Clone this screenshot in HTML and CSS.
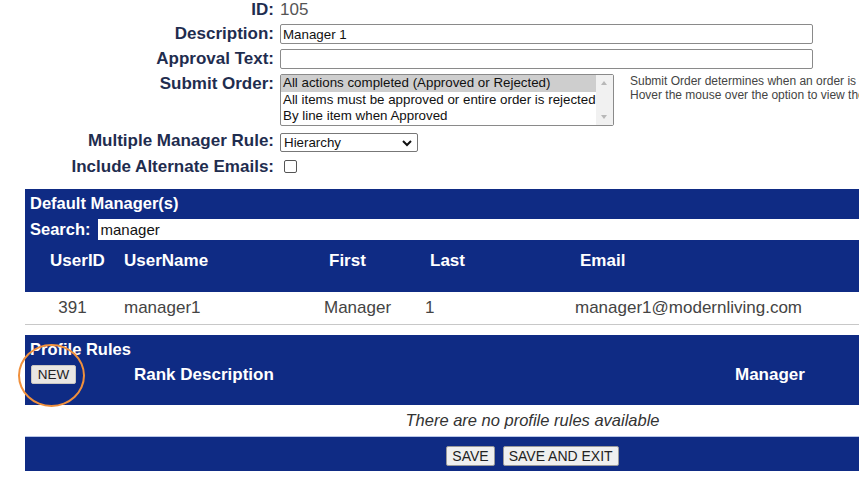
FILE: index.html
```html
<!DOCTYPE html>
<html lang="en">
<head>
    <meta charset="UTF-8">
    <meta name="viewport" content="width=device-width, initial-scale=1.0">
    <title>Approval Profile</title>
    <link rel="stylesheet" href="styles.css">
</head>
<body>
    <div class="page">
        <!-- Profile header fields -->
        <div class="form-grid">
            <div class="label">ID:</div>
            <div class="value">105</div>

            <div class="label">Description:</div>
            <div><input class="text-input" type="text" value="Manager 1"></div>

            <div class="label">Approval Text:</div>
            <div><input class="text-input" type="text" value=""></div>

            <div class="label">Submit Order:</div>
            <div class="submit-row">
                <div class="listbox">
                    <div class="listbox-options">
                        <div class="option selected">All actions completed (Approved or Rejected)</div>
                        <div class="option">All items must be approved or entire order is rejected</div>
                        <div class="option">By line item when Approved</div>
                    </div>
                    <div class="listbox-scroll">
                        <span class="arrow up"></span>
                        <span class="arrow down"></span>
                    </div>
                </div>
                <div class="help-text">
                    Submit Order determines when an order is released.<br>
                    Hover the mouse over the option to view the details.
                </div>
            </div>

            <div class="label">Multiple Manager Rule:</div>
            <div>
                <div class="dropdown">
                    <span>Hierarchy</span>
                    <svg width="12" height="8" viewBox="0 0 12 8"><path d="M2 2 L6 6 L10 2" fill="none" stroke="#111" stroke-width="2"/></svg>
                </div>
            </div>

            <div class="label">Include Alternate Emails:</div>
            <div><span class="checkbox"></span></div>
        </div>

        <!-- Default managers -->
        <div class="panel">
            <div class="panel-title">Default Manager(s)</div>
            <div class="search-row">
                <span class="search-label">Search:</span>
                <input class="search-input" type="text" value="manager">
            </div>
            <table class="grid">
                <thead>
                    <tr>
                        <th class="col-id">UserID</th>
                        <th class="col-user">UserName</th>
                        <th class="col-first wide">First</th>
                        <th class="col-last wide">Last</th>
                        <th class="wide">Email</th>
                    </tr>
                </thead>
                <tbody>
                    <tr>
                        <td class="col-id">391</td>
                        <td>manager1</td>
                        <td>Manager</td>
                        <td>1</td>
                        <td>manager1@modernliving.com</td>
                    </tr>
                </tbody>
            </table>
        </div>

        <!-- Profile rules -->
        <div class="panel rules">
            <div class="panel-title">Profile Rules</div>
            <div class="rules-head">
                <div class="new-cell">
                    <button class="btn btn-new">NEW</button>
                    <span class="highlight-ring"></span>
                </div>
                <div class="rank-col">Rank Description</div>
                <div class="manager-col">Manager</div>
            </div>
            <div class="empty-row">There are no profile rules available</div>
            <div class="footer-bar">
                <button class="btn">SAVE</button>
                <button class="btn">SAVE AND EXIT</button>
            </div>
        </div>
    </div>
</body>
</html>
```

FILE: styles.css
```css
* {
    margin: 0;
    padding: 0;
    box-sizing: border-box;
}

html, body {
    overflow: hidden;
}

body {
    font-family: "Liberation Sans", Arial, sans-serif;
    background: white;
    color: #333;
}

.page {
    width: 1040px;
}

/* ---- form ---- */
.form-grid {
    display: grid;
    grid-template-columns: 274px auto;
    column-gap: 6px;
    row-gap: 5px;
}

.label {
    text-align: right;
    font-weight: bold;
    font-size: 17px;
    color: #1f2d4f;
    line-height: 19px;
}

.value {
    font-size: 17px;
    color: #555;
    line-height: 19px;
}

.text-input {
    display: block;
    width: 533px;
    height: 20px;
    border: 1px solid #8a8a8a;
    border-radius: 2px;
    padding: 0 2px;
    font-family: inherit;
    font-size: 13.33px;
    color: #111;
}

.submit-row {
    display: flex;
    align-items: flex-start;
}

.listbox {
    display: flex;
    width: 334px;
    height: 52px;
    border: 1px solid #8a8a8a;
    border-radius: 2px;
    background: #fff;
}

.listbox-options {
    flex: 1;
}

.option {
    font-size: 13.33px;
    line-height: 16.7px;
    padding-left: 2px;
    color: #111;
    white-space: nowrap;
}

.option.selected {
    background: #cecece;
}

.listbox-scroll {
    width: 17px;
    background: #f1f1f1;
    position: relative;
}

.arrow {
    position: absolute;
    left: 5px;
    width: 0;
    height: 0;
    border-left: 3.5px solid transparent;
    border-right: 3.5px solid transparent;
}

.arrow.up {
    top: 6px;
    border-bottom: 4px solid #b8b8b8;
}

.arrow.down {
    bottom: 6px;
    border-top: 4px solid #b8b8b8;
}

.help-text {
    font-size: 12px;
    line-height: 14px;
    color: #444;
    margin-left: 16px;
    white-space: nowrap;
}

.dropdown {
    width: 138px;
    height: 19px;
    margin-top: 2px;
    border: 1px solid #777;
    border-radius: 2px;
    display: flex;
    align-items: center;
    justify-content: space-between;
    padding: 0 4px 0 3px;
    font-size: 13.33px;
    color: #111;
}

.checkbox {
    display: block;
    width: 13px;
    height: 13px;
    margin: 3px 0 0 4px;
    border: 1px solid #555;
    border-radius: 2px;
}

/* ---- blue panels ---- */
.panel {
    margin-left: 25px;
    margin-top: 13px;
    background: #0f2b84;
    color: white;
}

.panel-title {
    font-weight: bold;
    font-size: 16.5px;
    padding: 4px 5px 4px;
    line-height: 20px;
}

.search-row {
    display: flex;
    align-items: center;
    padding-left: 5px;
    height: 24px;
}

.search-label {
    font-weight: bold;
    font-size: 16.5px;
    margin-right: 7px;
}

.search-input {
    flex: 1;
    height: 21px;
    border: none;
    padding-left: 3px;
    font-family: inherit;
    font-size: 15px;
    color: #111;
}

.grid {
    width: 100%;
    border-collapse: collapse;
}

.grid th {
    text-align: left;
    font-size: 17px;
    font-weight: bold;
    height: 51px;
    padding: 0 0 12px 4px;
}

.grid th.wide {
    padding-left: 9px;
}

.grid td {
    background: white;
    color: #444;
    font-size: 17px;
    height: 32px;
    padding-left: 4px;
    border-bottom: 1px solid #c8c8c8;
}

.grid .col-id {
    width: 95px;
    text-align: center;
    padding-left: 0;
}

.grid th.col-id {
    padding-left: 10px;
}

.col-user { width: 200px; }
.col-first { width: 101px; }
.col-last { width: 150px; }

.rules {
    margin-top: 10px;
}

.rules .panel-title {
    padding-top: 4px;
    padding-bottom: 0;
}

.rules-head {
    display: flex;
    align-items: center;
    height: 46px;
    padding-bottom: 14px;
}

.new-cell {
    position: relative;
    width: 109px;
    padding-left: 6px;
}

.btn {
    font-family: inherit;
    font-size: 14px;
    color: #222;
    background: #efefef;
    border: 1px solid #9a9a9a;
    border-radius: 2px;
    height: 20px;
    padding: 0 5px;
}

.btn-new {
    display: block;
    height: 19px;
    width: 45px;
    font-size: 13.5px;
    background: #e9e6e3;
    border-color: #c9c6c2;
}

.highlight-ring {
    position: absolute;
    left: -7px;
    top: -21px;
    width: 67px;
    height: 63px;
    border: 2.5px solid #f0903c;
    border-radius: 50%;
}

.rank-col {
    width: 601px;
    font-weight: bold;
    font-size: 17px;
}

.manager-col {
    font-weight: bold;
    font-size: 17px;
}

.empty-row {
    background: white;
    color: #333;
    font-style: italic;
    font-size: 16.5px;
    text-align: center;
    height: 32px;
    line-height: 31px;
    border-bottom: 1px solid #b9c6e8;
}

.footer-bar {
    display: flex;
    justify-content: center;
    gap: 8px;
    padding: 9px 0 4px 0;
    height: 34px;
}
```
